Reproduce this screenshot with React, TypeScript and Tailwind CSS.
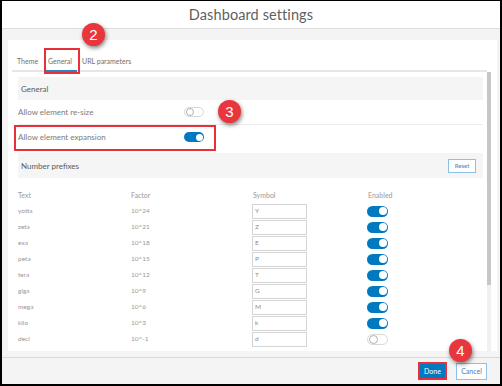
import React from "react";

const rows: [string, string, string, boolean][] = [
  ["yotta", "10^24", "Y", true],
  ["zeta", "10^21", "Z", true],
  ["exa", "10^18", "E", true],
  ["peta", "10^15", "P", true],
  ["tera", "10^12", "T", true],
  ["giga", "10^9", "G", true],
  ["mega", "10^6", "M", true],
  ["kilo", "10^3", "k", true],
  ["deci", "10^-1", "d", false],
];

function Toggle({ on, big = false }: { on: boolean; big?: boolean }) {
  if (on) {
    return (
      <span
        className={`flex items-center justify-end rounded-full bg-[#0079c1] px-[1.5px] ${
          big ? "w-[21px] h-[11px]" : "w-[20px] h-[10px]"
        }`}
      >
        <span className={`rounded-full bg-white ${big ? "w-[8px] h-[8px]" : "w-[7px] h-[7px]"}`} />
      </span>
    );
  }
  return (
    <span
      className={`flex items-center justify-start rounded-full bg-white border border-[#d8d8d8] px-[0.5px] ${
        big ? "w-[21px] h-[11px]" : "w-[20px] h-[10px]"
      }`}
    >
      <span className={`rounded-full bg-white border border-[#b0b0b0] ${big ? "w-[9px] h-[9px]" : "w-[8px] h-[8px]"}`} />
    </span>
  );
}

function Badge({ n, className }: { n: string; className: string }) {
  return (
    <div
      className={`absolute w-[23px] h-[23px] rounded-full bg-[#e8363c] text-white flex items-center justify-center text-[15px] leading-none font-['Liberation_Sans',sans-serif] shadow-[1px_2px_4px_rgba(0,0,0,0.5)] ${className}`}
    >
      {n}
    </div>
  );
}

export default function App() {
  return (
    <div className="relative w-[502px] h-[386px] flex flex-col bg-[#f4f4f4] border-black border-t border-x-2 border-b-2 overflow-hidden font-['Lato',sans-serif]">
      {/* header */}
      <div className="h-[28px] shrink-0 bg-white border-b border-[#dcdcdc] flex items-center justify-center">
        <span className="text-[14.5px] text-[#5f5f5f] tracking-[0.1px]">Dashboard settings</span>
      </div>

      {/* body */}
      <div className="flex-1 flex flex-col pt-[11px] pl-[6px] pr-[3px] min-h-0">
        <div className="h-[311px] bg-white flex flex-col">
          {/* tabs */}
          <div className="h-[32px] shrink-0 ml-[4px] mr-[10px] border-b-2 border-[#e6e6e6] flex items-end text-[7px] leading-[9px] text-[#6f6f6f]">
            <div className="w-[33px] pl-[5px] pb-[4px]">Theme</div>
            <div className="w-[32px] pl-[3px] pb-[4px] border-b-2 border-[#2b83c6] -mb-[2px]">General</div>
            <div className="pl-[5px] pb-[4px]">URL parameters</div>
          </div>

          {/* content */}
          <div className="flex-1 min-h-0 flex overflow-hidden">
            <div className="flex-1 pl-[10px] pt-[5px]">
              <div className="h-[23px] bg-[#f5f5f5] flex items-center pl-[3px] text-[8px] text-[#5a5a5a]">General</div>
              <div className="h-[25px] border-b border-[#ececec] flex items-center text-[8px] text-[#7a7a7a]">
                <span className="w-[166px]">Allow element re-size</span>
                <Toggle on={false} />
              </div>
              <div className="h-[24px] flex items-center text-[8px] text-[#7a7a7a]">
                <span className="w-[166px]">Allow element expansion</span>
                <Toggle on={true} />
              </div>
              <div className="mt-[4px] h-[25px] bg-[#f5f5f5] flex items-center justify-between pl-[3px] pr-[7px]">
                <span className="text-[8px] text-[#5a5a5a]">Number prefixes</span>
                <span className="w-[28px] h-[14px] border border-[#8cc0e6] bg-white flex items-center justify-center text-[6px] text-[#4a82b2]">
                  Reset
                </span>
              </div>

              <div className="mt-[9px] grid grid-cols-[113px_121px_115px_1fr] text-[#999]">
                <div className="h-[16px] flex items-center text-[7px]">Text</div>
                <div className="h-[16px] flex items-center text-[7px]">Factor</div>
                <div className="h-[16px] flex items-center pl-[1px] text-[7px]">Symbol</div>
                <div className="h-[16px] flex items-center pl-[1px] text-[7px]">Enabled</div>
                {rows.map(([t, f, s, on]) => (
                  <React.Fragment key={t}>
                    <div className="h-[16px] flex items-center text-[6.5px]">{t}</div>
                    <div className="h-[16px] flex items-center text-[6.5px]">{f}</div>
                    <div className="h-[16px] flex items-center">
                      <span className="w-[55px] h-[15px] border border-[#d4d4d4] flex items-center pl-[2px] text-[6.5px] text-[#8a8a8a]">
                        {s}
                      </span>
                    </div>
                    <div className="h-[16px] flex items-center">
                      <Toggle on={on} big />
                    </div>
                  </React.Fragment>
                ))}
              </div>
            </div>
            {/* scrollbar */}
            <div className="w-[4px] ml-[4px] mr-[6px] bg-[#f0f0f0] flex flex-col">
              <div className="h-[213px] bg-[#c6c6c6]" />
            </div>
          </div>
        </div>
      </div>

      {/* footer */}
      <div className="mt-[6px] h-[27px] shrink-0 border-t border-[#d9d9d9] flex items-center justify-end pr-[13px] gap-[9px]">
        <span className="w-[29px] h-[18px] border-2 border-[#e8303a] bg-[#0079c1] flex items-center justify-center text-[7px] text-white">
          Done
        </span>
        <span className="w-[31px] h-[17px] border border-[#8cc0e6] bg-white flex items-center justify-center text-[7px] text-[#4a82b2]">
          Cancel
        </span>
      </div>

      {/* annotations */}
      <div className="absolute left-[42px] top-[47px] w-[36px] h-[26px] border-2 border-[#e8303a]" />
      <div className="absolute left-[12px] top-[124px] w-[202px] h-[26px] border-2 border-[#e8303a]" />
      <Badge n="2" className="left-[80px] top-[22px]" />
      <Badge n="3" className="left-[216px] top-[99px]" />
      <Badge n="4" className="left-[447px] top-[338px]" />
    </div>
  );
}
